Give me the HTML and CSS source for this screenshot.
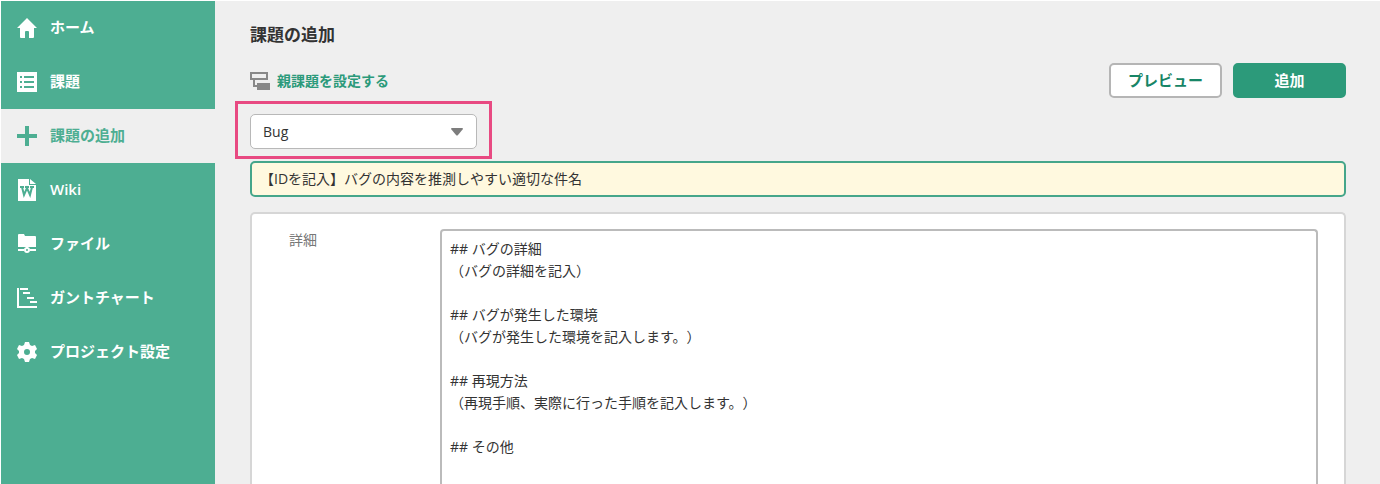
FILE: index.html
```html
<!DOCTYPE html>
<html lang="ja">
<head>
    <meta charset="utf-8">
    <title>課題の追加</title>
    <link rel="stylesheet" href="styles.css">
</head>
<body>
    <div class="app">
        <nav class="sidebar">
            <a href="#" class="nav-item">
                <svg class="icon" viewBox="0 0 20 20"><path d="M10 0 L20 10 H17 V19 Q17 20 16 20 H12 V14 Q12 13 11 13 H9 Q8 13 8 14 V20 H4 Q3 20 3 19 V10 H0 Z"/></svg>
                <span>ホーム</span>
            </a>
            <a href="#" class="nav-item">
                <svg class="icon" viewBox="0 0 20 20"><path fill-rule="evenodd" d="M0 0H20V20H0Z M3 4V6H5V4Z M7 4V6H17V4Z M3 9V11H5V9Z M7 9V11H17V9Z M3 14V16H5V14Z M7 14V16H17V14Z"/></svg>
                <span>課題</span>
            </a>
            <a href="#" class="nav-item active">
                <svg class="icon" viewBox="0 0 20 20"><path d="M8 0H12V8H20V12H12V20H8V12H0V8H8Z"/></svg>
                <span>課題の追加</span>
            </a>
            <a href="#" class="nav-item">
                <svg class="icon" viewBox="0 0 20 20"><path d="M1 -1H12V5H19V21H1Z"/><path d="M13 -1L19 4H13Z"/><path class="cut" d="M3 7H7M8 7H12M13 7H17M5 7L7 15L10 8L13 15L15 7"/></svg>
                <span>Wiki</span>
            </a>
            <a href="#" class="nav-item">
                <svg class="icon" viewBox="0 0 20 20"><path d="M1 1Q1 0 2 0H7L8 2H18Q19 2 19 3V13H1Z"/><path d="M1 15H7V17H1Z M13 15H19V17H13Z M9 12H11V14H9Z"/><circle class="ring" cx="10" cy="16" r="2"/></svg>
                <span>ファイル</span>
            </a>
            <a href="#" class="nav-item">
                <svg class="icon" viewBox="0 0 20 20"><path d="M0 0H2V18H20V20H0Z M3 0H11V2H3Z M6 4H13V6H6Z M10 9H17V11H10Z M13 13H20V15H13Z"/></svg>
                <span>ガントチャート</span>
            </a>
            <a href="#" class="nav-item">
                <svg class="icon" viewBox="0 0 20 20"><path fill-rule="evenodd" d="M8 0H12L13 3L15 4L18 3L20 7L18 9V11L20 13L18 17L15 16L13 17L12 20H8L7 17L5 16L2 17L0 13L2 11V9L0 7L2 3L5 4L7 3Z M10 7A3 3 0 1 0 10 13A3 3 0 1 0 10 7Z"/></svg>
                <span>プロジェクト設定</span>
            </a>
        </nav>

        <main class="content">
            <h1>課題の追加</h1>

            <div class="toolbar">
                <a href="#" class="parent-link">
                    <svg class="parent-icon" viewBox="0 0 20 18"><path d="M1 1H17V7H1Z M4 7V14H8" fill="none" stroke="#888" stroke-width="2"/><path d="M7 11H20V18H7Z" fill="#888"/></svg>
                    <span>親課題を設定する</span>
                </a>
                <div class="buttons">
                    <button type="button" class="btn">プレビュー</button>
                    <button type="submit" class="btn primary">追加</button>
                </div>
            </div>

            <div class="type-select">
                <select aria-label="種別">
                    <option>Bug</option>
                </select>
                <svg class="arrow" viewBox="0 0 12 8"><path d="M1 0H11Q12 0 12 1L7 7Q6 8 5 7L0 1Q0 0 1 0Z"/></svg>
            </div>

            <input type="text" class="subject" aria-label="件名" value="【IDを記入】バグの内容を推測しやすい適切な件名">

            <div class="panel">
                <label for="detail">詳細</label>
                <textarea id="detail">## バグの詳細
（バグの詳細を記入）

## バグが発生した環境
（バグが発生した環境を記入します。）

## 再現方法
（再現手順、実際に行った手順を記入します。）

## その他</textarea>
            </div>
        </main>
    </div>
</body>
</html>
```

FILE: styles.css
```css
* {
    box-sizing: border-box;
}

body {
    margin: 0;
    background-color: #fff;
    color: #333;
    font-family: "Open Sans", "Noto Sans CJK JP", sans-serif;
    font-size: 14px;
    text-spacing-trim: space-all;
}

a {
    text-decoration: none;
}

.app {
    display: flex;
    height: 100vh;
    padding: 1px 0 0 1px;
    overflow: hidden;
}

/* sidebar */

.sidebar {
    flex: none;
    width: 214px;
    background-color: #4dae92;
}

.nav-item {
    display: flex;
    align-items: center;
    gap: 13px;
    height: 54px;
    padding-left: 16px;
    color: #fff;
    font-size: 15px;
    font-weight: 600;
    line-height: 20px;
}

.nav-item span {
    padding-bottom: 2px;
}

.nav-item.active {
    background-color: #efefef;
    color: #4dae92;
}

.icon {
    width: 20px;
    height: 20px;
    fill: currentColor;
    overflow: visible;
}

.icon .cut {
    fill: none;
    stroke: #4dae92;
    stroke-width: 2;
}

.icon .ring {
    fill: #4dae92;
    stroke: currentColor;
    stroke-width: 2;
}

/* main area */

.content {
    flex: 1;
    display: flex;
    flex-direction: column;
    min-width: 0;
    padding: 21px 34px 0 35px;
    background-color: #efefef;
}

h1 {
    margin: 0;
    font-size: 17px;
    line-height: 26px;
}

.toolbar {
    display: flex;
    justify-content: space-between;
    align-items: center;
    margin-top: 15px;
}

.parent-link {
    display: flex;
    align-items: center;
    gap: 7px;
    color: #2b9a7a;
    font-weight: 600;
}

.parent-link span {
    padding-bottom: 2px;
}

.parent-icon {
    width: 20px;
    height: 18px;
}

.buttons {
    display: flex;
    gap: 11px;
}

.btn {
    width: 113px;
    height: 35px;
    padding: 0 0 2px;
    border: 2px solid #b5b5b5;
    border-radius: 5px;
    background-color: #fff;
    color: #178566;
    font-family: inherit;
    font-size: 15px;
    font-weight: bold;
}

.btn.primary {
    border-color: #2c9a7a;
    background-color: #2c9a7a;
    color: #fff;
}

.type-select {
    position: relative;
    width: 227px;
    margin-top: 16px;
}

/* highlight frame around the type drop-down */
.type-select::after {
    content: "";
    position: absolute;
    inset: -13px -15px -10px;
    border: 3px solid #e84a82;
    pointer-events: none;
}

select {
    display: block;
    width: 100%;
    height: 35px;
    padding: 0 12px;
    border: 1px solid #b8b8b8;
    border-radius: 5px;
    appearance: none;
    background-color: #fff;
    color: #333;
    font-family: inherit;
    font-size: 14px;
}

.arrow {
    position: absolute;
    top: 14px;
    right: 14px;
    width: 12px;
    height: 8px;
    fill: #7d7d7d;
    pointer-events: none;
}

.subject {
    width: 100%;
    height: 36px;
    margin-top: 12px;
    padding: 0 8px 2px;
    border: 2px solid #45a68a;
    border-radius: 5px;
    background-color: #fff9df;
    color: #333;
    font-family: inherit;
    font-size: 14px;
    text-spacing-trim: space-all;
}

.panel {
    flex: 1;
    display: flex;
    margin-top: 15px;
    padding: 15px 26px 0 37px;
    border: 2px solid #d6d6d6;
    border-bottom: 0;
    border-radius: 5px 5px 0 0;
    background-color: #fff;
}

.panel label {
    width: 151px;
    color: #777;
    line-height: 22px;
}

textarea {
    flex: 1;
    padding: 7px 8px;
    border: 2px solid #bbb;
    border-bottom: 0;
    border-radius: 4px 4px 0 0;
    background-color: #fff;
    color: #333;
    font-family: inherit;
    font-size: 14px;
    line-height: 22px;
    text-spacing-trim: space-all;
    resize: none;
}
```
